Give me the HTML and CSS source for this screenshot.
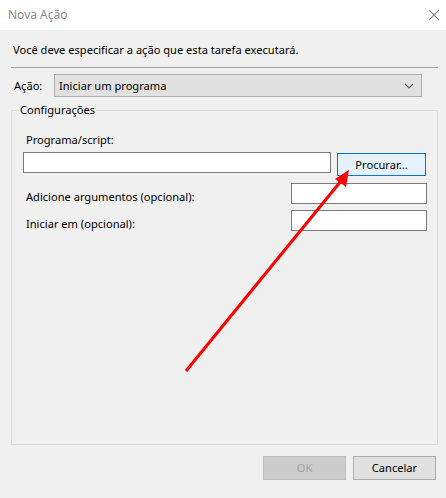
FILE: index.html
```html
<!DOCTYPE html>
<html lang="pt">
<head>
<meta charset="utf-8">
<title>Nova Ação</title>
<link rel="stylesheet" href="styles.css">
</head>
<body>
<div class="window">
  <div class="titlebar">
    <span class="title">Nova Ação</span>
    <svg class="close" width="12" height="12" viewBox="0 0 12 12"><path d="M1 1L11 11M11 1L1 11" stroke="#8a8a8a" stroke-width="1.1" fill="none"/></svg>
  </div>
  <div class="main">
    <p class="intro">Você deve especificar a ação que esta tarefa executará.</p>
    <div class="sep"></div>
    <div class="action-row">
      <span class="action-label">Ação:</span>
      <div class="select">
        <span>Iniciar um programa</span>
        <svg class="chev" width="10" height="6" viewBox="0 0 10 6"><path d="M1 1L5 5L9 1" stroke="#606060" stroke-width="1.1" fill="none"/></svg>
      </div>
    </div>
    <fieldset class="group">
      <legend>Configurações</legend>
      <div class="field-label">Programa/script:</div>
      <div class="prog-row">
        <div class="input prog-input"></div>
        <div class="btn btn-focus">Procurar...</div>
      </div>
      <div class="opt-row first">
        <span class="opt-label">Adicione argumentos (opcional):</span>
        <div class="input opt-input"></div>
      </div>
      <div class="opt-row">
        <span class="opt-label">Iniciar em (opcional):</span>
        <div class="input opt-input"></div>
      </div>
    </fieldset>
    <div class="buttons">
      <div class="btn btn-dlg btn-disabled">OK</div>
      <div class="btn btn-dlg">Cancelar</div>
    </div>
  </div>
  <svg class="arrow" width="446" height="498" viewBox="0 0 446 498">
    <line x1="186" y1="371" x2="341" y2="181" stroke="#ff0000" stroke-width="3"/>
    <polygon points="349,170 335,179 346,187" fill="#ff0000"/>
  </svg>
</div>
</body>
</html>
```
FILE: styles.css
```css
* { box-sizing: border-box; }
html, body { margin: 0; padding: 0; }
body {
  width: 446px;
  height: 498px;
  background: #f0f0f0;
  font-family: "Noto Sans", "Liberation Sans", sans-serif;
  font-size: 11.1px;
  color: #000;
  overflow: hidden;
}
.window { position: relative; width: 446px; height: 498px; }
.titlebar {
  height: 30px;
  background: #fff;
  display: flex;
  align-items: center;
  justify-content: space-between;
  padding: 0 6px 0 8px;
}
.title { color: #8c8c8c; font-size: 12px; line-height: 18px; }
.close { display: block; }
.main { padding: 0 8px 0 11px; }
.intro {
  margin: 12px 0 0 2px;
  line-height: 16px;
  height: 16px;
  white-space: nowrap;
}
.sep { height: 1px; background: #a0a0a0; margin-top: 9px; }
.action-row {
  display: flex;
  align-items: center;
  margin-top: 6px;
  height: 23px;
}
.action-label { width: 43px; padding-left: 3px; line-height: 16px; }
.select {
  width: 368px;
  height: 23px;
  background: #e1e1e1;
  border: 1px solid #adadad;
  display: flex;
  align-items: center;
  justify-content: space-between;
  padding: 0 7px 0 4px;
  line-height: 16px;
}
.chev { display: block; }
.group {
  margin: 5px 0 0 0;
  padding: 0 10px 0 11px;
  border: 1px solid #dcdcdc;
  height: 343px;
  min-width: 0;
}
.group legend {
  padding: 0 1px;
  margin-left: -4px;
  line-height: 16px;
}
.field-label { margin-top: 14px; padding-left: 3px; line-height: 16px; }
.prog-row { display: flex; align-items: flex-start; margin-top: 4px; height: 24px; }
.input { background: #fff; border: 1px solid #7a7a7a; height: 21px; }
.prog-input { width: 308px; }
.btn {
  height: 23px;
  display: flex;
  align-items: center;
  justify-content: center;
  line-height: 16px;
}
.btn-focus {
  width: 89px;
  margin-left: 6px;
  margin-top: 1px;
  background: #e5f1fb;
  border: 1px solid #0078d7;
}
.opt-row { display: flex; justify-content: space-between; margin-top: 6px; height: 21px; }
.opt-row.first { margin-top: 7px; }
.opt-label { padding-left: 3px; padding-top: 6px; line-height: 16px; }
.opt-input { width: 136px; }
.buttons {
  display: flex;
  justify-content: flex-end;
  gap: 7px;
  margin: 11px 2px 0 0;
}
.btn-dlg {
  width: 83px;
  height: 24px;
  background: #e1e1e1;
  border: 1px solid #adadad;
}
.btn-disabled { background: #cccccc; border-color: #bfbfbf; color: #a0a0a0; }
.arrow { position: absolute; left: 0; top: 0; pointer-events: none; }
```
